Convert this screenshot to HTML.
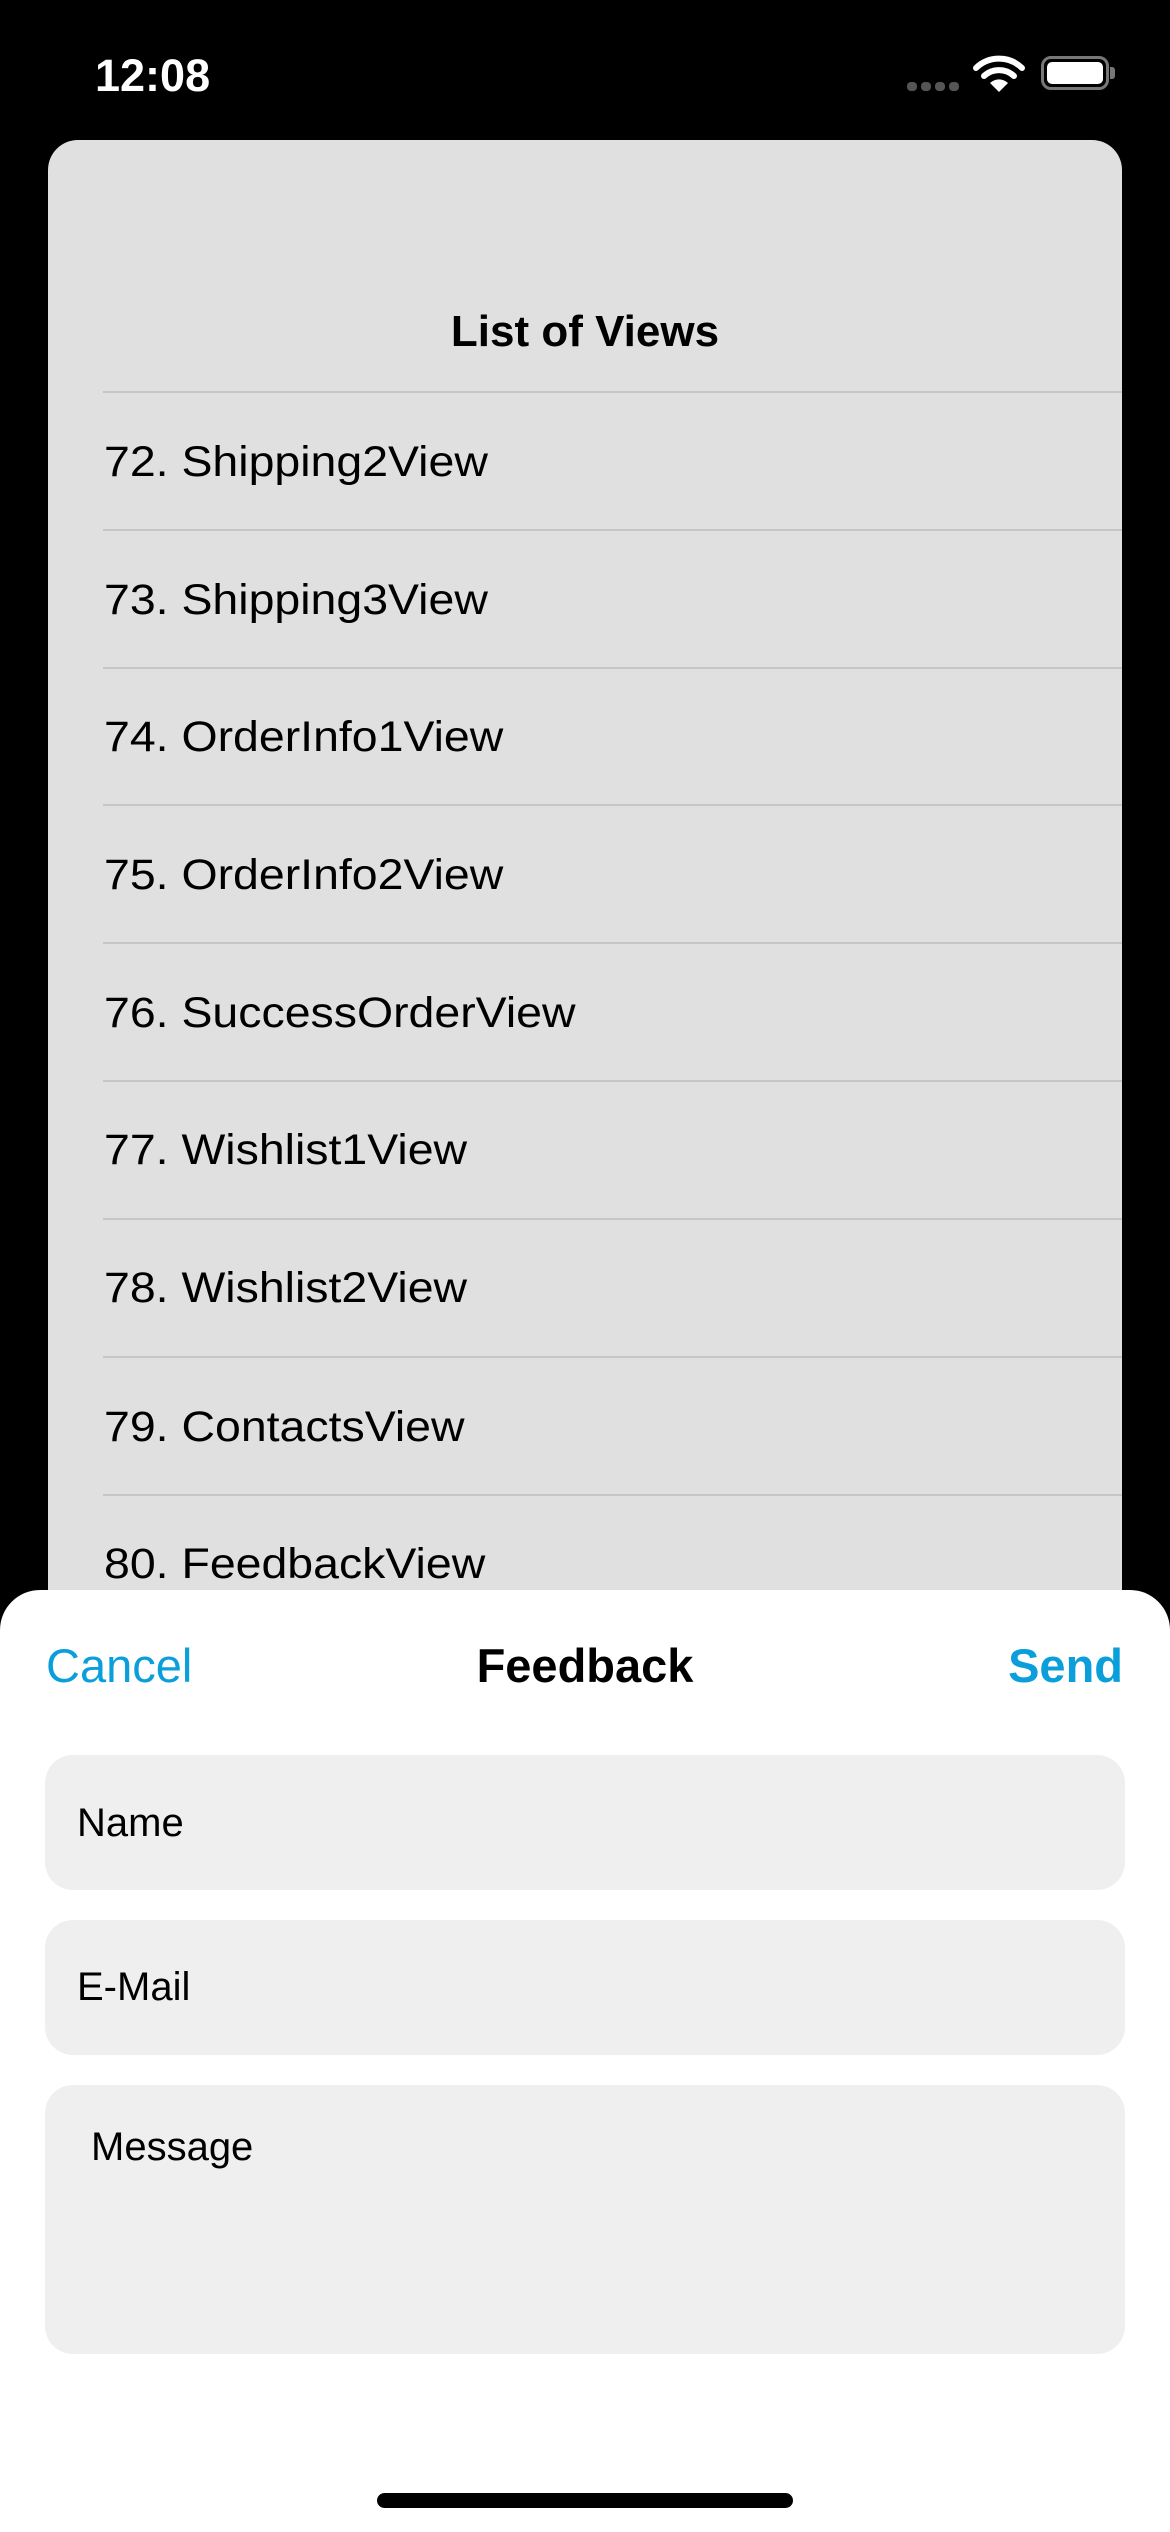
<!DOCTYPE html>
<html><head><meta charset="utf-8">
<style>
*{margin:0;padding:0;box-sizing:border-box}
html,body{width:1170px;height:2532px;background:#000;overflow:hidden;font-family:"Liberation Sans",sans-serif}
.a{position:absolute;line-height:1;white-space:nowrap}
#card{position:absolute;left:48px;top:140px;width:1074px;height:1500px;background:#e0e0e0;border-radius:30px 30px 0 0;overflow:hidden}
.sep{position:absolute;left:103px;right:48px;height:2px;background:#c6c6c6}
.row{position:absolute;left:104px;font-size:43px;color:#000;line-height:1;white-space:nowrap;transform:scaleX(1.08);transform-origin:0 0}
#sheet{position:absolute;left:0;top:1590px;width:1170px;height:942px;background:#fff;border-radius:40px 40px 0 0}
.field{position:absolute;left:45px;width:1080px;background:#efefef;border-radius:28px}
.ft{position:absolute;font-size:40px;color:#000;line-height:1}
</style></head><body>
<div class="a" style="left:95px;top:53px;font-size:45px;font-weight:bold;color:#fff">12:08</div>
<div style="position:absolute;left:907px;top:82px;width:10px;height:9px;border-radius:4px;background:#555"></div>
<div style="position:absolute;left:921px;top:82px;width:10px;height:9px;border-radius:4px;background:#555"></div>
<div style="position:absolute;left:935px;top:82px;width:10px;height:9px;border-radius:4px;background:#555"></div>
<div style="position:absolute;left:949px;top:82px;width:10px;height:9px;border-radius:4px;background:#555"></div>
<svg style="position:absolute;left:973px;top:55px" width="52" height="38" viewBox="0 0 52 38">
<path d="M3 13 A33 33 0 0 1 49 13" stroke="#fff" stroke-width="6" fill="none" stroke-linecap="round"/>
<path d="M11 21 A22 22 0 0 1 41 21" stroke="#fff" stroke-width="6" fill="none" stroke-linecap="round"/>
<path d="M17 28 L26 37 L35 28 A13 13 0 0 0 17 28 Z" fill="#fff"/>
</svg>
<div style="position:absolute;left:1041px;top:56px;width:68px;height:34px;border:3px solid #777;border-radius:10px"></div>
<div style="position:absolute;left:1047px;top:62px;width:56px;height:22px;background:#fff;border-radius:5px"></div>
<div style="position:absolute;left:1110px;top:67px;width:5px;height:12px;background:#777;border-radius:0 3px 3px 0"></div>

<div id="card">
<div class="a" style="left:0;width:1074px;text-align:center;top:170px;font-size:44px;font-weight:bold;color:#000">List of Views</div>
</div>
<div class="sep" style="top:391px"></div>
<div class="row" style="top:441px">72. Shipping2View</div>
<div class="sep" style="top:529px"></div>
<div class="row" style="top:579px">73. Shipping3View</div>
<div class="sep" style="top:667px"></div>
<div class="row" style="top:716px">74. OrderInfo1View</div>
<div class="sep" style="top:804px"></div>
<div class="row" style="top:854px">75. OrderInfo2View</div>
<div class="sep" style="top:942px"></div>
<div class="row" style="top:992px">76. SuccessOrderView</div>
<div class="sep" style="top:1080px"></div>
<div class="row" style="top:1129px">77. Wishlist1View</div>
<div class="sep" style="top:1218px"></div>
<div class="row" style="top:1267px">78. Wishlist2View</div>
<div class="sep" style="top:1356px"></div>
<div class="row" style="top:1406px">79. ContactsView</div>
<div class="sep" style="top:1494px"></div>
<div class="row" style="top:1543px">80. FeedbackView</div>

<div id="sheet"></div>
<div class="a" style="left:46px;top:1642px;font-size:47px;color:#0a9fdb">Cancel</div>
<div class="a" style="left:0;width:1170px;text-align:center;top:1642px;font-size:47px;font-weight:bold;color:#000">Feedback</div>
<div class="a" style="right:47px;top:1642px;font-size:47px;font-weight:bold;color:#0a9fdb">Send</div>

<div class="field" style="top:1755px;height:135px"></div>
<div class="ft" style="left:77px;top:1803px">Name</div>
<div class="field" style="top:1920px;height:135px"></div>
<div class="ft" style="left:77px;top:1967px">E-Mail</div>
<div class="field" style="top:2085px;height:269px"></div>
<div class="ft" style="left:91px;top:2127px">Message</div>

<div style="position:absolute;left:377px;top:2493px;width:416px;height:15px;border-radius:8px;background:#000"></div>
</body></html>
